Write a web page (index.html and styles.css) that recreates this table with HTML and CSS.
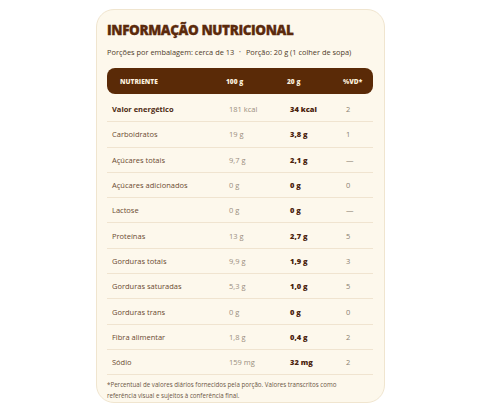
FILE: index.html
```html
<!DOCTYPE html>
<html lang="pt-BR">
<head>
<meta charset="utf-8">
<title>Informação Nutricional</title>
<link rel="stylesheet" href="styles.css">
</head>
<body>
<main class="card">
  <h1 class="title">INFORMAÇÃO NUTRICIONAL</h1>
  <p class="meta">Porções por embalagem: cerca de 13 <span class="dot">•</span> Porção: 20 g (1 colher de sopa)</p>
  <div class="table">
    <div class="head">
      <span>NUTRIENTE</span><span>100 g</span><span>20 g</span><span>%VD*</span>
    </div>
    <div class="row main"><span class="name">Valor energético</span><span class="v">181 kcal</span><span class="b">34 kcal</span><span class="vd">2</span></div>
    <div class="row"><span class="name">Carboidratos</span><span class="v">19 g</span><span class="b">3,8 g</span><span class="vd">1</span></div>
    <div class="row"><span class="name">Açúcares totais</span><span class="v">9,7 g</span><span class="b">2,1 g</span><span class="vd">—</span></div>
    <div class="row"><span class="name">Açúcares adicionados</span><span class="v">0 g</span><span class="b">0 g</span><span class="vd">0</span></div>
    <div class="row"><span class="name">Lactose</span><span class="v">0 g</span><span class="b">0 g</span><span class="vd">—</span></div>
    <div class="row"><span class="name">Proteínas</span><span class="v">13 g</span><span class="b">2,7 g</span><span class="vd">5</span></div>
    <div class="row"><span class="name">Gorduras totais</span><span class="v">9,9 g</span><span class="b">1,9 g</span><span class="vd">3</span></div>
    <div class="row"><span class="name">Gorduras saturadas</span><span class="v">5,3 g</span><span class="b">1,0 g</span><span class="vd">5</span></div>
    <div class="row"><span class="name">Gorduras trans</span><span class="v">0 g</span><span class="b">0 g</span><span class="vd">0</span></div>
    <div class="row"><span class="name">Fibra alimentar</span><span class="v">1,8 g</span><span class="b">0,4 g</span><span class="vd">2</span></div>
    <div class="row"><span class="name">Sódio</span><span class="v">159 mg</span><span class="b">32 mg</span><span class="vd">2</span></div>
  </div>
  <p class="note">*Percentual de valores diários fornecidos pela porção. Valores transcritos como referência visual e sujeitos à conferência final.</p>
</main>
</body>
</html>
```
FILE: styles.css
```css
html, body {
  margin: 0;
  padding: 0;
  background: #ffffff;
}
body {
  font-family: "Open Sans", "Noto Sans", sans-serif;
  padding: 9px 0 0 96px;
}
.card {
  box-sizing: border-box;
  width: 289px;
  height: 394px;
  background: #fdf8ec;
  border: 1px solid #f0e5cf;
  border-radius: 18px;
  padding: 11px 11px 0 10px;
}
.title {
  margin: 0;
  font-family: "Open Sans", sans-serif;
  font-weight: 800;
  font-size: 13.5px;
  line-height: 18px;
  color: #5b2a0c;
  letter-spacing: -0.4px;
  -webkit-text-stroke: 0.3px #5b2a0c;
}
.meta {
  margin: 8px 0 0;
  font-size: 7.4px;
  line-height: 10px;
  color: #4f3a2a;
}
.dot {
  color: #8d7a68;
  font-size: 5px;
  vertical-align: 1px;
  margin: 0 3px;
}
.table {
  margin-top: 11px;
}
.head, .row {
  display: grid;
  grid-template-columns: 116px 61px 56px 1fr;
  align-items: center;
}
.head {
  height: 26px;
  background: #5a2a07;
  border-radius: 8px;
  color: #fbefdc;
  font-weight: 800;
  font-size: 6.6px;
  margin-bottom: 3px;
}
.head span:first-child { padding-left: 13px; }
.head span { padding-left: 3px; }
.row {
  box-sizing: border-box;
  height: 25.3px;
  border-bottom: 1px solid #f0e4d0;
  font-size: 7.5px;
  color: #6b4a30;
}
.row span { padding-left: 6px; }
.row .name { padding-left: 5px; }
.row.main .name {
  font-weight: 700;
  color: #4d2a12;
}
.row .v { color: #9a8e80; }
.row .b { font-weight: 800; color: #4a230c; }
.row .vd { color: #8a7e70; }
.note {
  margin: 5px 0 0;
  max-width: 232px;
  font-size: 6.2px;
  line-height: 10.5px;
  color: #6b5644;
}
```
